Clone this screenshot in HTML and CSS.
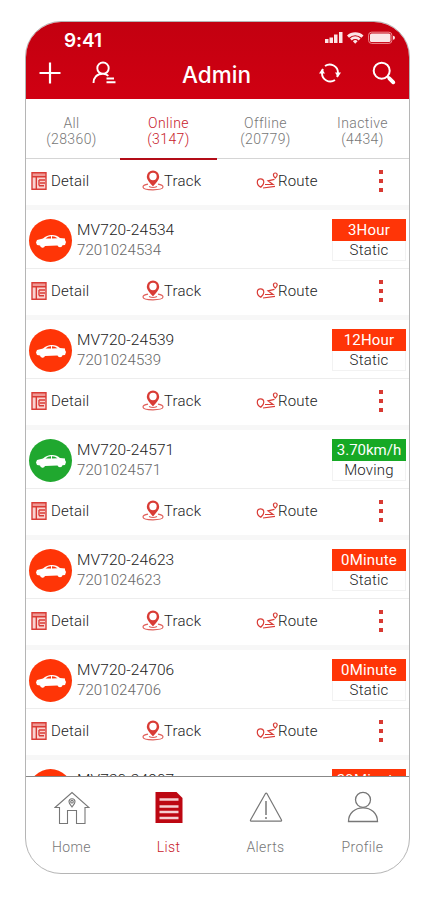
FILE: index.html
```html
<!DOCTYPE html>
<html lang="en">
<head>
    <meta charset="UTF-8">
    <meta name="viewport" content="width=device-width, initial-scale=1.0">
    <title>Admin - Devices</title>
    <link rel="stylesheet" href="styles.css">
</head>
<body>
    <!-- Shared icons -->
    <svg class="sprite" width="0" height="0">
        <symbol id="car" viewBox="0 0 32 14">
            <path fill="#fff" d="M1 8.500 L2 6 L8 4.500 Q12 .8 17 1 Q22 1 25 4 L30 4.500 L30 6 L31 8 L30 11 L27.500 11.300 A2.600 2.600 0 0 1 22.500 11.500 L10 12 A2.600 2.600 0 0 1 5 11.500 L2 11Z"/>
            <path fill="currentColor" d="M10.500 4.500 Q13 2.300 16 2.300 V4.500Z M17 2.300 Q20 2.300 22.500 4.200 L17 4.500Z"/>
        </symbol>
        <symbol id="detail" viewBox="0 0 16 18">
            <path fill="#f9d3d1" d="M1 1h14v16H1z"/>
            <path fill="#ee9a96" d="M1 1h14v3.500H1z"/>
            <path fill="none" stroke="#d93c36" stroke-width="1.400" d="M1 .8h14v16.400H1zM1 4.800h14M5.300 5v12M8 8h6M8 13.500V8M9 11h5M8 13.800h5"/>
        </symbol>
        <symbol id="track" viewBox="0 0 22 21">
            <path fill="#d93c36" fill-rule="evenodd" d="M11 .5a6.200 6.200 0 0 1 6.200 6.200c0 3.600-3.800 6.600-6.200 9.800-2.400-3.200-6.200-6.200-6.200-9.800A6.200 6.200 0 0 1 11 .5zm0 2.300a3.700 3.700 0 1 0 0 7.400 3.700 3.700 0 0 0 0-7.400z"/>
            <path fill="none" stroke="#e0605b" stroke-width="1.200" d="M6 14.200C2.500 14.800 1 16 1 17c0 1.700 4 2.800 10 2.800s10-1.100 10-2.800c0-1-1.500-2.200-5-2.800M7 16.500q4 2 8 0"/>
        </symbol>
        <symbol id="route" viewBox="0 0 22 18">
            <path fill="none" stroke="#d93c36" stroke-width="1.200" d="M4.800 15.200C2.500 14 1.300 12 1.300 10.200a3.200 3.200 0 0 1 6.500 0c0 2-1.300 3.500-3 5zM19.300 6c-1.300-1.200-1.900-2-1.900-3.100a1.900 1.900 0 0 1 3.800 0c0 1.100-.7 1.900-1.900 3.100zM18.500 7.300L12 8.800l5 3.700H9M7 16l12-1.700"/>
        </symbol>
    </svg>

    <div class="phone">
        <header class="header">
            <div class="status-bar">
                <span class="time">9:41</span>
                <svg class="status-icons" width="72" height="14" viewBox="0 0 72 14">
                    <g fill="#fbe6e7">
                        <path d="M1 8h3.500v4H1zM5.500 6.500H9V12H5.500zM10 3.500h3.500V12H10zM15 1h3.500v11H15z"/>
                        <path d="M23 4.500a12 12 0 0 1 16.500 0l-2 2.200a9 9 0 0 0-12.500 0zM26 7.500a7.500 7.500 0 0 1 10.500 0l-1.800 2a5 5 0 0 0-6.900 0zM31.200 12.800l-2.300-2.500a3.300 3.300 0 0 1 4.700 0z"/>
                        <rect x="46" y="2.500" width="20.500" height="8.500" rx="1.500"/>
                        <path d="M69 4.800q2 0 2 2t-2 2z"/>
                    </g>
                    <rect x="44.600" y="1.200" width="23.300" height="11.200" rx="3" fill="none" stroke="#ed8c91"/>
                </svg>
            </div>
            <div class="toolbar">
                <div class="toolbar-group">
                    <svg width="22" height="22" viewBox="0 0 22 22"><path stroke="#fff" stroke-width="2.200" d="M11 .5v21M.5 11h21"/></svg>
                    <svg class="user-icon" width="24" height="24" viewBox="0 0 24 24"><path fill="none" stroke="#fff" stroke-width="1.900" d="M11 1.500a5.700 5.700 0 1 0 0 11.400 5.700 5.700 0 0 0 0-11.400zM1.500 22c0-5.500 3.500-9.300 9.500-9.300 2.500 0 4.200.9 5.300 2.200M14.500 17.500h7.500M14.500 21.300h9"/></svg>
                </div>
                <h1 class="title">Admin</h1>
                <div class="toolbar-group right">
                    <svg width="22" height="20" viewBox="0 0 22 20">
                        <path fill="none" stroke="#fff" stroke-width="1.900" d="M6 3a8.300 8.300 0 0 1 13 7M3 10a8.300 8.300 0 0 1 1-4M16 17a8.300 8.300 0 0 1-13-7M19 10a8.300 8.300 0 0 1-1 4"/>
                        <path fill="#fff" d="M16 9.500h6l-3 4.500zM0 10.500h6L3 6z"/>
                    </svg>
                    <svg class="search-icon" width="24" height="24" viewBox="0 0 24 24">
                        <circle cx="9.700" cy="9.700" r="8" fill="none" stroke="#fff" stroke-width="2"/>
                        <path stroke="#fff" stroke-width="2" d="M15 15l3 3"/>
                        <path stroke="#fff" stroke-width="3.800" stroke-linecap="round" d="M17.300 17.300l4 4"/>
                    </svg>
                </div>
            </div>
        </header>

        <nav class="tabs">
            <div class="tab"><span>All</span><span>(28360)</span></div>
            <div class="tab active"><span>Online</span><span>(3147)</span></div>
            <div class="tab"><span>Offline</span><span>(20779)</span></div>
            <div class="tab"><span>Inactive</span><span>(4434)</span></div>
        </nav>

        <main class="list">
            <div class="actions">
                <span class="action"><svg width="16" height="18"><use href="#detail"/></svg>Detail</span>
                <span class="action"><svg width="22" height="21"><use href="#track"/></svg>Track</span>
                <span class="action"><svg width="22" height="18"><use href="#route"/></svg>Route</span>
                <span class="more"><i></i><i></i><i></i></span>
            </div>

            <section class="device">
                <div class="device-info">
                    <div class="avatar"><svg width="32" height="14"><use href="#car"/></svg></div>
                    <div class="names"><span class="name">MV720-24534</span><span class="imei">7201024534</span></div>
                    <div class="state"><span class="badge">3Hour</span><span class="state-text">Static</span></div>
                </div>
                <div class="actions">
                    <span class="action"><svg width="16" height="18"><use href="#detail"/></svg>Detail</span>
                    <span class="action"><svg width="22" height="21"><use href="#track"/></svg>Track</span>
                    <span class="action"><svg width="22" height="18"><use href="#route"/></svg>Route</span>
                    <span class="more"><i></i><i></i><i></i></span>
                </div>
            </section>

            <section class="device">
                <div class="device-info">
                    <div class="avatar"><svg width="32" height="14"><use href="#car"/></svg></div>
                    <div class="names"><span class="name">MV720-24539</span><span class="imei">7201024539</span></div>
                    <div class="state"><span class="badge">12Hour</span><span class="state-text">Static</span></div>
                </div>
                <div class="actions">
                    <span class="action"><svg width="16" height="18"><use href="#detail"/></svg>Detail</span>
                    <span class="action"><svg width="22" height="21"><use href="#track"/></svg>Track</span>
                    <span class="action"><svg width="22" height="18"><use href="#route"/></svg>Route</span>
                    <span class="more"><i></i><i></i><i></i></span>
                </div>
            </section>

            <section class="device moving">
                <div class="device-info">
                    <div class="avatar"><svg width="32" height="14"><use href="#car"/></svg></div>
                    <div class="names"><span class="name">MV720-24571</span><span class="imei">7201024571</span></div>
                    <div class="state"><span class="badge">3.70km/h</span><span class="state-text">Moving</span></div>
                </div>
                <div class="actions">
                    <span class="action"><svg width="16" height="18"><use href="#detail"/></svg>Detail</span>
                    <span class="action"><svg width="22" height="21"><use href="#track"/></svg>Track</span>
                    <span class="action"><svg width="22" height="18"><use href="#route"/></svg>Route</span>
                    <span class="more"><i></i><i></i><i></i></span>
                </div>
            </section>

            <section class="device">
                <div class="device-info">
                    <div class="avatar"><svg width="32" height="14"><use href="#car"/></svg></div>
                    <div class="names"><span class="name">MV720-24623</span><span class="imei">7201024623</span></div>
                    <div class="state"><span class="badge">0Minute</span><span class="state-text">Static</span></div>
                </div>
                <div class="actions">
                    <span class="action"><svg width="16" height="18"><use href="#detail"/></svg>Detail</span>
                    <span class="action"><svg width="22" height="21"><use href="#track"/></svg>Track</span>
                    <span class="action"><svg width="22" height="18"><use href="#route"/></svg>Route</span>
                    <span class="more"><i></i><i></i><i></i></span>
                </div>
            </section>

            <section class="device">
                <div class="device-info">
                    <div class="avatar"><svg width="32" height="14"><use href="#car"/></svg></div>
                    <div class="names"><span class="name">MV720-24706</span><span class="imei">7201024706</span></div>
                    <div class="state"><span class="badge">0Minute</span><span class="state-text">Static</span></div>
                </div>
                <div class="actions">
                    <span class="action"><svg width="16" height="18"><use href="#detail"/></svg>Detail</span>
                    <span class="action"><svg width="22" height="21"><use href="#track"/></svg>Track</span>
                    <span class="action"><svg width="22" height="18"><use href="#route"/></svg>Route</span>
                    <span class="more"><i></i><i></i><i></i></span>
                </div>
            </section>

            <section class="device">
                <div class="device-info">
                    <div class="avatar"></div>
                    <div class="names"><span class="name">MV720-24907</span></div>
                    <div class="state"><span class="badge">29Minute</span></div>
                </div>
            </section>
        </main>

        <footer class="bottom-nav">
            <div class="nav-item">
                <svg width="36" height="34" viewBox="0 0 36 34" fill="none" stroke="#777" stroke-width="1.100">
                    <path d="M1 16.500L18 1.500l17 15h-4V32.500h-8.500V19.500h-9V32.500H5.500v-16z"/>
                    <path d="M18 16c-1.500-2-3-3.500-3-5.300a3 3 0 0 1 6 0c0 1.800-1.500 3.300-3 5.300z"/>
                    <circle cx="18" cy="10.700" r="1.300"/>
                </svg>
                <span>Home</span>
            </div>
            <div class="nav-item active">
                <svg width="28" height="34" viewBox="0 0 28 34">
                    <path fill="#bd0712" d="M.5 1h21l6 6v25H.5z"/>
                    <path stroke="#f6cfd2" stroke-width="2.300" d="M4.500 8.500h19M4.500 15.500h19M4.500 21h19M4.500 27h19"/>
                </svg>
                <span>List</span>
            </div>
            <div class="nav-item">
                <svg width="34" height="34" viewBox="0 0 34 34" fill="none" stroke="#777" stroke-width="1.200" stroke-linejoin="round">
                    <path d="M16.500 2.500q.7-.8 1.400 0L32.500 29q.3 1.200-1 1.200H2.500q-1.300 0-1-1.200z"/>
                    <path stroke-width="1.500" d="M17 10v14M17 26v2"/>
                </svg>
                <span>Alerts</span>
            </div>
            <div class="nav-item">
                <svg width="32" height="34" viewBox="0 0 32 34" fill="none" stroke="#777" stroke-width="1.300">
                    <circle cx="16" cy="8.800" r="7.500"/>
                    <path d="M1.500 30.500C1.500 22 8 16.800 16 16.800S30.500 22 30.500 30.500z"/>
                </svg>
                <span>Profile</span>
            </div>
        </footer>
    </div>
</body>
</html>
```
FILE: styles.css
```css
* {
    margin: 0;
    padding: 0;
    box-sizing: border-box;
}

body {
    font-family: Roboto, "Liberation Sans", sans-serif;
    font-weight: 300;
    background: #fff;
    padding: 21px 17px 0 25px;
    overflow: hidden;
}

svg {
    display: block;
    flex-shrink: 0;
}

.sprite {
    position: absolute;
}

.phone {
    width: 385px;
    height: 853px;
    border: 1px solid #b5b5b5;
    border-radius: 36px;
    overflow: hidden;
    display: flex;
    flex-direction: column;
}

/* Header */
.header {
    height: 77px;
    flex-shrink: 0;
    background: linear-gradient(#c30010, #d00012);
    color: #fff;
}

.status-bar {
    height: 34px;
    display: flex;
    justify-content: space-between;
    align-items: center;
    padding: 3px 13px 0 38px;
}

.time {
    font-family: Inter, sans-serif;
    font-size: 19px;
    font-weight: 600;
    letter-spacing: -0.1px;
}

.status-icons {
    margin-top: -5px;
}

.toolbar {
    height: 34px;
    display: grid;
    grid-template-columns: 1fr auto 1fr;
    align-items: center;
    padding: 0 13px;
}

.toolbar-group {
    display: flex;
    align-items: center;
    gap: 31px;
}

.toolbar-group.right {
    justify-content: flex-end;
}

.title {
    font-family: Inter, sans-serif;
    font-size: 22.5px;
    font-weight: 500;
    padding: 3px 2px 0 0;
}

/* Tabs */
.tabs {
    height: 60px;
    flex-shrink: 0;
    display: grid;
    grid-template-columns: repeat(4, 97px);
    margin-left: -3px;
    border-bottom: 1px solid #d5d5d5;
}

.tab {
    height: 61px;
    display: flex;
    flex-direction: column;
    align-items: center;
    padding-top: 16px;
    font-size: 14px;
    line-height: 16px;
    letter-spacing: 0.4px;
    color: #777;
    border-bottom: 2px solid transparent;
}

.tab.active {
    color: #c8202b;
    border-bottom-color: #b30d18;
}

/* Device list */
.list {
    flex: 1;
    min-height: 0;
    overflow: hidden;
}

.device {
    border-top: 5px solid #f7f7f7;
}

.device-info {
    height: 59px;
    display: flex;
    align-items: flex-start;
    padding: 9px 3px 0 3px;
    border-bottom: 1px solid #ededed;
}

.avatar {
    width: 43px;
    height: 43px;
    border-radius: 50%;
    background: #ff3507;
    color: #ff3507;
    display: flex;
    align-items: center;
    justify-content: center;
}

.moving .avatar {
    background: #20a82f;
    color: #20a82f;
}

.names {
    flex: 1;
    display: flex;
    flex-direction: column;
    padding: 1px 0 0 5px;
    line-height: 20px;
}

.name {
    font-size: 15.5px;
    letter-spacing: 0.1px;
    color: #222;
}

.imei {
    font-size: 15px;
    letter-spacing: 0.1px;
    color: #666;
}

.state {
    width: 74px;
    text-align: center;
    font-size: 15px;
    letter-spacing: 0.2px;
}

.badge {
    display: block;
    height: 22px;
    line-height: 23px;
    background: #ff3507;
    color: #fff;
    font-weight: 400;
}

.moving .badge {
    background: #16a925;
    letter-spacing: 0;
}

.state-text {
    display: block;
    height: 20px;
    line-height: 19px;
    border: 1px solid #f2f2f2;
    border-top: 0;
    color: #222;
}

.actions {
    height: 46px;
    display: grid;
    grid-template-columns: 111px 114px 115px 1fr;
    align-items: center;
    padding: 0 0 3px 5px;
}

.action {
    display: flex;
    align-items: center;
    font-size: 15px;
    letter-spacing: 0.2px;
    color: #222;
}

.action:first-child {
    gap: 4px;
}

.more {
    display: flex;
    flex-direction: column;
    gap: 5px;
    padding-left: 8px;
}

.more i {
    width: 4px;
    height: 4px;
    background: #d83a32;
}

/* Bottom navigation */
.bottom-nav {
    height: 97px;
    flex-shrink: 0;
    display: grid;
    grid-template-columns: repeat(4, 97px);
    margin-left: -3px;
    border-top: 1px solid #888;
}

.nav-item {
    display: flex;
    flex-direction: column;
    align-items: center;
    gap: 13px;
    padding-top: 14px;
    font-size: 14px;
    line-height: 18px;
    letter-spacing: 0.4px;
    color: #777;
}

.nav-item.active {
    color: #c8202b;
}
```
